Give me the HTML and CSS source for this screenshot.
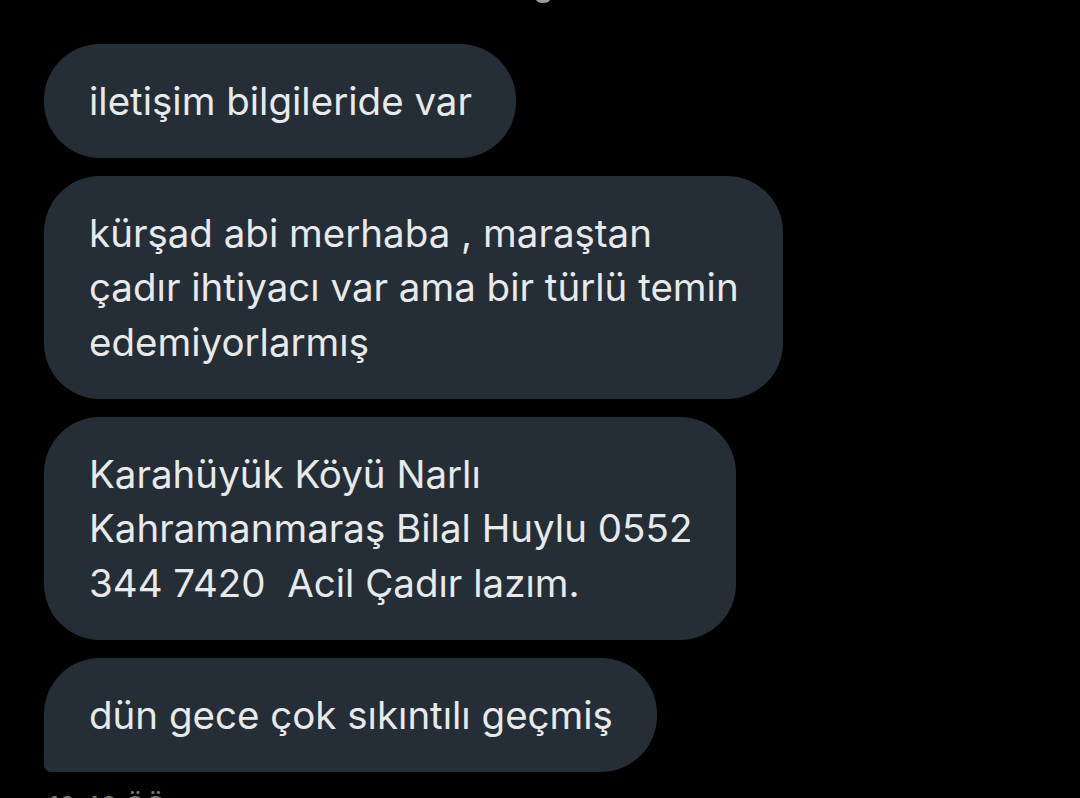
FILE: index.html
```html
<!DOCTYPE html>
<html lang="tr">
<head>
<meta charset="utf-8">
<link rel="stylesheet" href="styles.css">
</head>
<body>
<div class="top-mark"></div>
<div class="thread">
  <div class="bubble">iletişim bilgileride var</div>
  <div class="bubble">kürşad abi merhaba , maraştan<br>çadır ihtiyacı var ama bir türlü temin<br>edemiyorlarmış</div>
  <div class="bubble">Karahüyük Köyü Narlı<br>Kahramanmaraş Bilal Huylu 0552<br>344 7420&nbsp; Acil Çadır lazım.</div>
  <div class="bubble last">dün gece çok sıkıntılı geçmiş</div>
  <div class="time">12:42 ÖÖ</div>
</div>
</body>
</html>
```
FILE: styles.css
```css
html, body {
  margin: 0;
  padding: 0;
  background: #000;
  height: 798px;
  overflow: hidden;
}
body {
  position: relative;
  font-family: "Inter", "Roboto", "Liberation Sans", sans-serif;
}
.top-mark {
  position: absolute;
  left: 536px;
  top: -4px;
  width: 14px;
  height: 7px;
  border-radius: 50%;
  background: #9a9d9f;
}
.thread {
  display: flex;
  flex-direction: column;
  align-items: flex-start;
  gap: 18px;
  padding: 44px 0 0 44px;
}
.bubble {
  background: #252e36;
  color: #e7e9ea;
  font-size: 38.5px;
  line-height: 54.5px;
  padding: 29.75px 44px 29.75px 45px;
  border-radius: 56px;
  white-space: nowrap;
}
.bubble.last {
  border-bottom-left-radius: 7px;
}
.time {
  margin-top: 1px;
  padding-left: 4px;
  color: #71767b;
  font-size: 27px;
  line-height: 32px;
}
```
